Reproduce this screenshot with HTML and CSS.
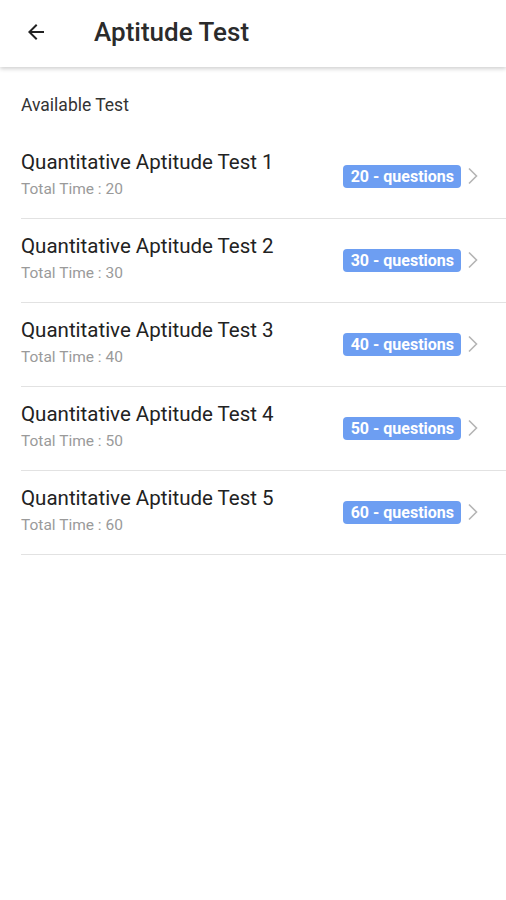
FILE: index.html
```html
<!DOCTYPE html>
<html lang="en">
<head>
    <meta charset="UTF-8">
    <meta name="viewport" content="width=device-width, initial-scale=1.0">
    <title>Aptitude Test</title>
    <link rel="stylesheet" href="styles.css">
</head>
<body>

    <div class="app-bar">
        <svg class="back" width="24" height="24" viewBox="0 0 24 24">
            <path d="M20 11H7.83l5.59-5.59L12 4l-8 8 8 8 1.41-1.41L7.83 13H20v-2z" fill="#222"/>
        </svg>
        <h1 class="app-title">Aptitude Test</h1>
    </div>

    <div class="content">
        <p class="section-label">Available Test</p>

        <ul class="test-list">
            <li class="test-row">
                <div class="test-info">
                    <div class="test-name">Quantitative Aptitude Test 1</div>
                    <div class="test-time">Total Time : 20</div>
                </div>
                <span class="badge">20 - questions</span>
                <svg class="chevron" width="12" height="18" viewBox="0 0 12 18"><path d="M2 1.5l7.5 7.5L2 16.5" fill="none" stroke="#b5b5b5" stroke-width="1.6"/></svg>
            </li>
            <li class="test-row">
                <div class="test-info">
                    <div class="test-name">Quantitative Aptitude Test 2</div>
                    <div class="test-time">Total Time : 30</div>
                </div>
                <span class="badge">30 - questions</span>
                <svg class="chevron" width="12" height="18" viewBox="0 0 12 18"><path d="M2 1.5l7.5 7.5L2 16.5" fill="none" stroke="#b5b5b5" stroke-width="1.6"/></svg>
            </li>
            <li class="test-row">
                <div class="test-info">
                    <div class="test-name">Quantitative Aptitude Test 3</div>
                    <div class="test-time">Total Time : 40</div>
                </div>
                <span class="badge">40 - questions</span>
                <svg class="chevron" width="12" height="18" viewBox="0 0 12 18"><path d="M2 1.5l7.5 7.5L2 16.5" fill="none" stroke="#b5b5b5" stroke-width="1.6"/></svg>
            </li>
            <li class="test-row">
                <div class="test-info">
                    <div class="test-name">Quantitative Aptitude Test 4</div>
                    <div class="test-time">Total Time : 50</div>
                </div>
                <span class="badge">50 - questions</span>
                <svg class="chevron" width="12" height="18" viewBox="0 0 12 18"><path d="M2 1.5l7.5 7.5L2 16.5" fill="none" stroke="#b5b5b5" stroke-width="1.6"/></svg>
            </li>
            <li class="test-row">
                <div class="test-info">
                    <div class="test-name">Quantitative Aptitude Test 5</div>
                    <div class="test-time">Total Time : 60</div>
                </div>
                <span class="badge">60 - questions</span>
                <svg class="chevron" width="12" height="18" viewBox="0 0 12 18"><path d="M2 1.5l7.5 7.5L2 16.5" fill="none" stroke="#b5b5b5" stroke-width="1.6"/></svg>
            </li>
        </ul>
    </div>

</body>
</html>
```

FILE: styles.css
```css
body {
    font-family: Roboto, "Liberation Sans", sans-serif;
    margin: 0;
    background-color: white;
    color: #212121;
}

.app-bar {
    display: flex;
    align-items: center;
    height: 63px;
    padding-bottom: 4px;
    background-color: white;
    box-shadow: 0 2px 4px rgba(0, 0, 0, 0.18);
}

.back {
    margin-left: 24px;
}

.app-title {
    margin: 0 0 0 46px;
    font-size: 26px;
    font-weight: 500;
    color: #2b2b2b;
}

.content {
    padding: 28px 0 0 21px;
}

.section-label {
    margin: 0 0 20px;
    font-size: 17.5px;
    line-height: 20px;
    color: #333;
}

.test-list {
    list-style: none;
    margin: 0;
    padding: 0;
}

.test-row {
    display: flex;
    align-items: center;
    padding: 15px 27px 20px 0;
    border-bottom: 1px solid #e2e2e2;
}

.test-info {
    flex: 1;
}

.test-name {
    font-size: 20.5px;
    line-height: 24px;
    color: #222;
}

.test-time {
    margin-top: 6px;
    font-size: 15.5px;
    line-height: 18px;
    color: #9a9a9a;
}

.badge {
    margin-top: 4px;
    padding: 2px 7px 2px 8px;
    font-size: 16px;
    line-height: 19px;
    font-weight: bold;
    color: white;
    background-color: #6d9ef2;
    border-radius: 4px;
}

.chevron {
    margin: 4px 0 0 6px;
}
```
